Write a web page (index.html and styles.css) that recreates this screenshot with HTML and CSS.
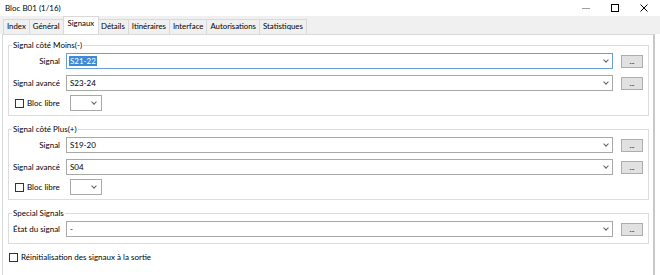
FILE: index.html
```html
<!DOCTYPE html>
<html lang="fr">
<head>
<meta charset="utf-8">
<title>Bloc B01 (1/16)</title>
<link rel="stylesheet" href="styles.css">
</head>
<body>
<div class="window">
  <div class="titlebar">
    <span class="title">Bloc B01 (1/16)</span>
    <div class="controls">
      <svg class="ctl" width="10" height="10" viewBox="0 0 10 10"><path d="M1 5.5H9" stroke="#a0a0a0" stroke-width="1"/></svg>
      <svg class="ctl" width="10" height="10" viewBox="0 0 10 10"><rect x="1.5" y="1.5" width="7" height="7" fill="none" stroke="#000" stroke-width="1"/></svg>
      <svg class="ctl" width="10" height="10" viewBox="0 0 10 10"><path d="M1.5 1.5L8.5 8.5M8.5 1.5L1.5 8.5" stroke="#000" stroke-width="1"/></svg>
    </div>
  </div>
  <div class="tabstrip">
    <span class="tab">Index</span>
    <span class="tab">Général</span>
    <span class="tab active">Signaux</span>
    <span class="tab">Détails</span>
    <span class="tab">Itinéraires</span>
    <span class="tab">Interface</span>
    <span class="tab">Autorisations</span>
    <span class="tab">Statistiques</span>
  </div>
  <div class="panel">
    <fieldset class="group">
      <legend>Signal côté Moins(-)</legend>
      <div class="row">
        <label class="lbl">Signal</label>
        <div class="combo focus"><span class="val sel">S21-22</span><span class="arrow"></span></div>
        <button class="more">...</button>
      </div>
      <div class="row">
        <label class="lbl">Signal avancé</label>
        <div class="combo"><span class="val">S23-24</span><span class="arrow"></span></div>
        <button class="more">...</button>
      </div>
      <div class="row small">
        <span class="chk"></span><span class="chklbl">Bloc libre</span>
        <div class="combo mini"><span class="arrow"></span></div>
      </div>
    </fieldset>
    <fieldset class="group">
      <legend>Signal côté Plus(+)</legend>
      <div class="row">
        <label class="lbl">Signal</label>
        <div class="combo"><span class="val">S19-20</span><span class="arrow"></span></div>
        <button class="more">...</button>
      </div>
      <div class="row">
        <label class="lbl">Signal avancé</label>
        <div class="combo"><span class="val">S04</span><span class="arrow"></span></div>
        <button class="more">...</button>
      </div>
      <div class="row small">
        <span class="chk"></span><span class="chklbl">Bloc libre</span>
        <div class="combo mini"><span class="arrow"></span></div>
      </div>
    </fieldset>
    <fieldset class="group">
      <legend>Special Signals</legend>
      <div class="row">
        <label class="lbl left">État du signal</label>
        <div class="combo"><span class="val">-</span><span class="arrow"></span></div>
        <button class="more">...</button>
      </div>
    </fieldset>
    <div class="reset"><span class="chk"></span><span class="chklbl">Réinitialisation des signaux à la sortie</span></div>
  </div>
</div>
</body>
</html>
```
FILE: styles.css
```css
* { box-sizing: border-box; }
html, body { margin: 0; padding: 0; }
body {
  width: 660px;
  height: 275px;
  overflow: hidden;
  background: #ffffff;
  font-family: Lato, "Noto Sans", sans-serif;
  font-size: 8px;
  color: #000;
}
.window { display: flex; flex-direction: column; height: 275px; }
.titlebar {
  height: 16px;
  background: #fff;
  display: flex;
  align-items: center;
  justify-content: space-between;
  padding-left: 5px;
}
.controls { display: flex; align-items: center; gap: 19px; padding-right: 11px; }
.ctl { display: block; }
.tabstrip {
  background: #f0f0f0;
  height: 18px;
  display: flex;
  align-items: flex-end;
  padding-left: 3px;
}
.tab {
  height: 15px;
  padding: 0 3px;
  font-size: 7.8px;
  border: 1px solid #d9d9d9;
  border-bottom: none;
  border-left: none;
  background: #f0f0f0;
  display: flex;
  align-items: center;
  line-height: 1;
}
.tab:first-child { border-left: 1px solid #d9d9d9; }
.tab.active {
  height: 18px;
  background: #fff;
  border-left: 1px solid #d9d9d9;
  margin-left: -1px;
  margin-right: -1px;
  position: relative;
  z-index: 1;
  padding: 0 4px 4px 4px;
}
.panel {
  flex: 1;
  margin-left: 2px;
  width: 653px;
  background: #fff;
  border: 1px solid #d9d9d9;
  border-right: 2px solid #c8c8c8;
  border-bottom: none;
  padding: 5px 5px 0 5px;
}
.group {
  margin: 0 0 8px 0;
  padding: 0 0 3px 0;
  border: 1px solid #dcdcdc;
  width: 641px;
}
.group legend {
  padding: 0 1px;
  margin-left: 3px;
  line-height: 10px;
}
.row {
  display: flex;
  align-items: center;
  height: 22px;
}
.lbl {
  width: 51px;
  text-align: right;
  white-space: nowrap;
}
.lbl.left { text-align: left; padding-left: 4px; }
.combo {
  margin-left: 6px;
  width: 547px;
  height: 16px;
  border: 1px solid #a8a8a8;
  display: flex;
  align-items: center;
  justify-content: space-between;
  padding: 0 4px 0 3px;
  background: #fff;
}
.combo.focus { border-color: #6ba0d6; }
.val { line-height: 10px; }
.val.sel { background: #3c8bd8; color: #fff; padding: 0 1px; margin-left: -1px; }
.arrow {
  width: 4px;
  height: 4px;
  border-right: 1px solid #606060;
  border-bottom: 1px solid #606060;
  transform: rotate(45deg);
  margin-top: -3px;
  margin-left: auto;
}
.more {
  margin-left: 8px;
  width: 22px;
  height: 13px;
  border: 1px solid #adadad;
  background: #e1e1e1;
  font: inherit;
  font-size: 7px;
  line-height: 8px;
  padding: 0;
  color: #000;
}
.row.small { padding-left: 6px; height: 18px; }
.chk {
  width: 9px;
  height: 9px;
  border: 1px solid #333;
  background: #fff;
  display: inline-block;
  flex: none;
}
.chklbl { margin-left: 3px; white-space: nowrap; }
.row.small .combo.mini { margin-left: 10px; width: 32px; padding-right: 5px; }
.reset {
  display: flex;
  align-items: center;
  padding-left: 1px;
  margin-top: 4px;
}
```
